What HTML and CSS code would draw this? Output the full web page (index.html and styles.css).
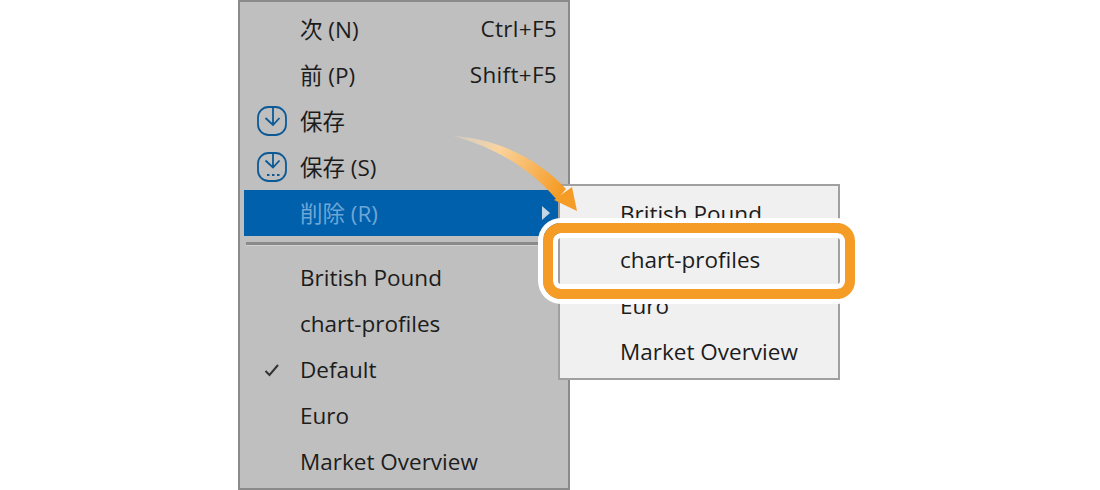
FILE: index.html
```html
<!DOCTYPE html>
<html lang="ja">
<head>
<meta charset="utf-8">
<title>Menu</title>
<link rel="stylesheet" href="styles.css">
</head>
<body>
<div class="stage">
  <div class="menu">
    <div class="row"><span class="gutter"></span><span class="label">次 (N)</span><span class="key">Ctrl+F5</span></div>
    <div class="row"><span class="gutter"></span><span class="label">前 (P)</span><span class="key">Shift+F5</span></div>
    <div class="row"><span class="gutter"><svg class="ico" viewBox="0 0 30 30"><rect x="1" y="1" width="28" height="28" rx="10.500"/><path d="M16 1V19M8.500 12L16 19L22.500 12"/></svg></span><span class="label">保存</span></div>
    <div class="row"><span class="gutter"><svg class="ico" viewBox="0 0 30 30"><rect x="1" y="1" width="28" height="28" rx="10.500"/><path d="M16 1V15.500M8.500 8.500L16 15.500L22.500 8.500"/><path d="M10 23h2.500M15 23h2.500M20 23h2.500"/></svg></span><span class="label">保存 (S)</span></div>
    <div class="row active"><span class="gutter"></span><span class="label">削除 (R)</span><span class="caret"></span></div>
    <div class="sep"></div>
    <div class="row"><span class="gutter"></span><span class="label">British Pound</span></div>
    <div class="row"><span class="gutter"></span><span class="label">chart-profiles</span></div>
    <div class="row"><span class="gutter"><svg class="check" viewBox="0 0 16 14"><path d="M1.500 8L5.500 12L14 2"/></svg></span><span class="label">Default</span></div>
    <div class="row"><span class="gutter"></span><span class="label">Euro</span></div>
    <div class="row"><span class="gutter"></span><span class="label">Market Overview</span></div>
  </div>
  <div class="submenu">
    <div class="subrow">British Pound</div>
    <div class="subrow">chart-profiles</div>
    <div class="subrow">Euro</div>
    <div class="subrow">Market Overview</div>
  </div>
  <div class="callout"></div>
  <svg class="arrow" viewBox="0 0 1100 490">
    <defs>
      <linearGradient id="fade" gradientUnits="userSpaceOnUse" x1="452" y1="136" x2="560" y2="190">
        <stop offset="0" stop-color="#fbe3c2" stop-opacity="0.2"/>
        <stop offset="0.4" stop-color="#fad39c"/>
        <stop offset="1" stop-color="#f59c26"/>
      </linearGradient>
    </defs>
    <path fill="url(#fade)" d="M453 136C495 138 538 158 566 189L557 200C532 170 497 148 453 136Z"/>
    <path fill="#f59c26" d="M577 211L554 200L572 187Z"/>
  </svg>
</div>
</body>
</html>
```
FILE: styles.css
```css
* { box-sizing: border-box; }
html, body { margin: 0; padding: 0; background: #fff; }
.stage {
  position: relative;
  width: 1100px;
  height: 490px;
  overflow: hidden;
  padding-left: 238px;
  font-family: "Open Sans", "Noto Sans CJK JP", sans-serif;
  font-size: 22.5px;
  color: #1c1c1c;
}
.menu {
  width: 332px;
  height: 490px;
  background: #bfbfbf;
  border: 2px solid #8a8a8a;
  padding: 4px;
}
.row {
  height: 46px;
  display: flex;
  align-items: center;
  padding-right: 7px;
}
.gutter {
  width: 56px;
  flex: none;
  display: flex;
  justify-content: center;
  padding-right: 1px;
}
.label { flex: 1; margin-top: -2px; }
.key { text-align: right; margin-top: -2px; letter-spacing: 0.3px; }
.active { background: #0060ac; color: #6ea6d6; }
.caret {
  width: 0;
  height: 0;
  margin-right: 7px;
  border-left: 8px solid #c4d6e6;
  border-top: 7px solid transparent;
  border-bottom: 7px solid transparent;
}
.sep {
  height: 4px;
  margin: 6px 2px 9px;
  border-top: 3px solid #8a8a8a;
  border-bottom: 1px solid #d2d2d2;
}
.ico { width: 30px; height: 30px; fill: none; stroke: #0b5a96; stroke-width: 1.8; }
.check { width: 16px; height: 14px; fill: none; stroke: #333; stroke-width: 2; }
.submenu {
  position: absolute;
  left: 558px;
  top: 184px;
  width: 282px;
  height: 196px;
  background: #f0f0f0;
  border: 2px solid #a0a0a0;
  padding-top: 5px;
}
.subrow {
  height: 46px;
  display: flex;
  align-items: center;
  padding: 0 0 2px 60px;
}
.callout {
  position: absolute;
  left: 543px;
  top: 223px;
  width: 312px;
  height: 76px;
  border: 10px solid #f59c26;
  border-radius: 18px;
  box-shadow: 0 0 0 5px #fff, inset 0 0 0 5px #fff;
}
.arrow { position: absolute; left: 0; top: 0; width: 1100px; height: 490px; pointer-events: none; }
```
